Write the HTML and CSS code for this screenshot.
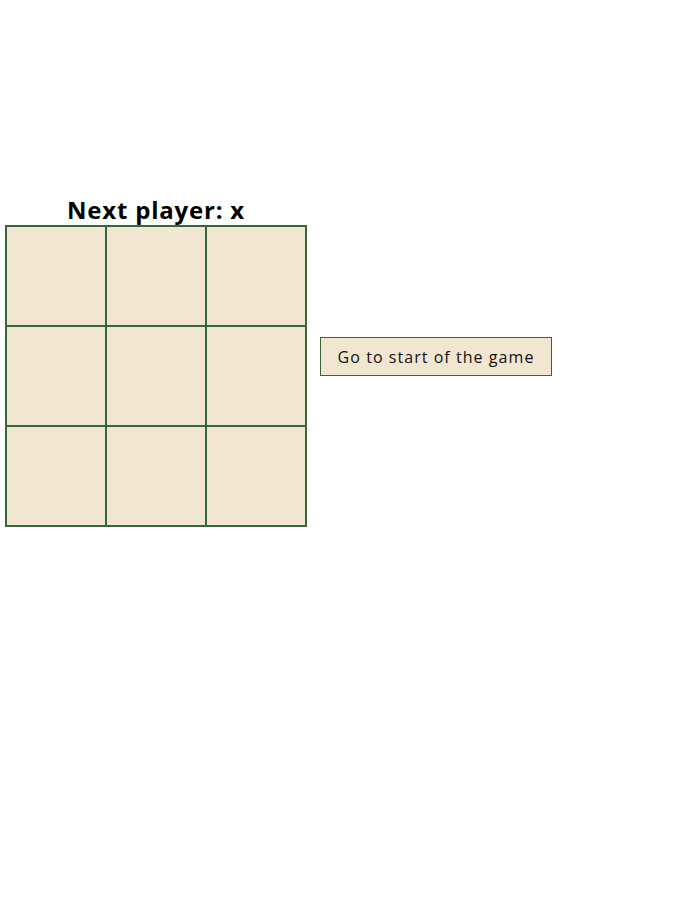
FILE: index.html
```html
<!DOCTYPE html>
<html>
<head>
<meta charset="utf-8">
<link rel="stylesheet" href="styles.css">
</head>
<body>
<div class="game">
  <div class="game-board">
    <div class="status">Next player: x</div>
    <div class="board">
      <button class="square"></button>
      <button class="square"></button>
      <button class="square"></button>
      <button class="square"></button>
      <button class="square"></button>
      <button class="square"></button>
      <button class="square"></button>
      <button class="square"></button>
      <button class="square"></button>
    </div>
  </div>
  <div class="game-info">
    <ol class="moves">
      <li><button class="move">Go to start of the game</button></li>
    </ol>
  </div>
</div>
</body>
</html>
```
FILE: styles.css
```css
html, body {
  margin: 0;
  padding: 0;
  background: #ffffff;
}
body {
  font-family: "Open Sans", "DejaVu Sans", sans-serif;
  color: #000;
}
.game {
  display: flex;
  flex-direction: row;
  align-items: center;
  gap: 13px;
  padding: 186px 0 0 5px;
}
.game-board {
  display: flex;
  flex-direction: column;
  width: 302px;
}
.status {
  height: 39px;
  line-height: 48px;
  text-align: center;
  font-weight: 700;
  font-size: 24px;
  letter-spacing: 0.8px;
}
.board {
  display: grid;
  grid-template-columns: repeat(3, 98px);
  grid-template-rows: repeat(3, 98px);
  gap: 2px;
  padding: 2px;
  background: #356640;
}
.square {
  border: none;
  margin: 0;
  padding: 0;
  background: #f1e6d0;
}
.moves {
  list-style: none;
  margin: 0;
  padding: 0;
}
.move {
  font-family: "Open Sans", "DejaVu Sans", sans-serif;
  font-size: 16px;
  letter-spacing: 1.05px;
  color: #111;
  background: #f1e6d0;
  border: 1px solid #356640;
  padding: 0 10px;
  height: 39px;
  width: 232px;
  margin: 0;
}
```
